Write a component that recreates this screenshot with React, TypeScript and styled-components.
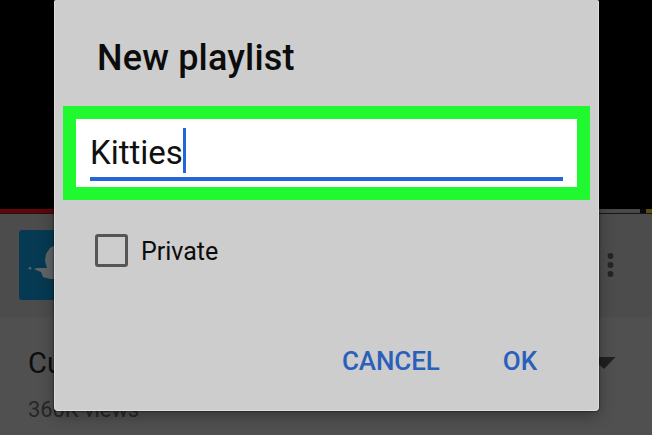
import React from "react";
import styled, { createGlobalStyle } from "styled-components";

const GlobalStyle = createGlobalStyle`
  *, *::before, *::after { box-sizing: border-box; }
  body { margin: 0; overflow: hidden; background: #4e4e4e; font-family: Roboto, sans-serif; }
`;

const Screen = styled.div`
  position: relative;
  width: 652px;
  height: 435px;
  overflow: hidden;
  display: flex;
  flex-direction: column;
`;

const Video = styled.div`
  height: 209px;
  flex: none;
  background: #000;
`;

const Progress = styled.div`
  height: 5px;
  flex: none;
  display: flex;
  background: #080808;
  border-bottom: 1px solid #171717;
`;

const Segment = styled.div<{ $width: number; $color: string }>`
  width: ${(p) => p.$width}px;
  height: 4px;
  flex: none;
  background: ${(p) => p.$color};
`;

const ChannelRow = styled.div`
  height: 103px;
  flex: none;
  padding: 16px 36px 0 18.5px;
  display: flex;
  justify-content: space-between;
  background: #4c4c4c;
`;

const Avatar = styled.div`
  width: 70px;
  height: 70px;
  border-radius: 3px;
  overflow: hidden;
  background: #063a53;
`;

const MoreIcon = styled.svg`
  display: block;
  width: 12px;
  height: 36px;
  margin-top: 17px;
`;

const Info = styled.div`
  flex: 1;
  position: relative;
  padding: 28px 35px 0 28px;
  background: #505050;
`;

const InfoHeader = styled.div`
  display: flex;
  justify-content: space-between;
  height: 36px;
`;

const VideoTitle = styled.div`
  font-size: 29px;
  line-height: 36px;
  color: #0d0d0d;
`;

const Arrow = styled.svg`
  display: block;
  width: 26px;
  height: 13px;
  margin-top: 12px;
`;

const Views = styled.div`
  margin-top: 16px;
  font-size: 22px;
  line-height: 26px;
  letter-spacing: -0.08px;
  color: #272727;
`;

const Dialog = styled.div`
  position: absolute;
  left: 54px;
  top: 0;
  width: 545px;
  height: 411px;
  padding: 37px 9px 0;
  display: flex;
  flex-direction: column;
  background: #cdcdcd;
  border: solid #dedede;
  border-width: 0 1px 1px;
  border-radius: 2px 2px 4px 4px;
  box-shadow: 0 0 2px #000, 0 5px 16px rgba(0, 0, 0, 0.32);
`;

const Heading = styled.h1`
  margin: 0 0 0 33px;
  font-size: 36px;
  font-weight: 500;
  line-height: 42px;
  letter-spacing: 0.18px;
  height: 69px;
  color: #0c0c0c;
  white-space: nowrap;
`;

const Highlight = styled.div`
  width: 527px;
  height: 94px;
  flex: none;
  margin-left: -1px;
  border: 13px solid #20f92f;
  padding: 9px 14px 0;
  background: #fff;
`;

const Field = styled.div`
  height: 53px;
  display: flex;
  border-bottom: 4px solid #2466d5;
  font-size: 33px;
  line-height: 49px;
  color: #101010;
`;

const Caret = styled.span`
  width: 3px;
  height: 45px;
  background: #2466d5;
`;

const CheckRow = styled.label`
  display: flex;
  align-items: center;
  height: 33px;
  margin: 34px 0 0 31px;
  font-size: 25px;
  line-height: 33px;
  color: #0c0c0c;
`;

const CheckLabel = styled.span`
  padding-top: 2px;
`;

const Checkbox = styled.span`
  width: 33px;
  height: 33px;
  margin-right: 13px;
  border: 3px solid #565656;
  border-radius: 3px;
`;

const Actions = styled.div`
  display: flex;
  justify-content: flex-end;
  gap: 63px;
  margin: 78px 52px 0 0;
`;

const Action = styled.button`
  padding: 0;
  border: 0;
  background: none;
  font: 500 26px/32px Roboto, sans-serif;
  letter-spacing: -0.08px;
  color: #2a60bb;
`;

export default function App() {
  return (
    <>
      <GlobalStyle />
      <Screen>
        <Video />
        <Progress>
          <Segment $width={200} $color="#650508" />
          <Segment $width={440} $color="#494949" />
          <Segment $width={6} $color="#080808" />
          <Segment $width={6} $color="#55500b" />
        </Progress>
        <ChannelRow>
          <Avatar>
            <svg width="70" height="70" viewBox="0 0 70 70" fill="#606466">
              <path d="M36 15 L31 18 L27 24 L26 31 L28 38 L18 38 L15 39 L17 40 L22 42 L24 47 L31 49 L45 49 L48 15Z" />
              <circle cx="11" cy="38.3" r="1.3" />
            </svg>
          </Avatar>
          <MoreIcon viewBox="0 0 12 36" fill="#242424">
            <circle cx="6.5" cy="9" r="2.9" />
            <circle cx="6.5" cy="18" r="2.9" />
            <circle cx="6.5" cy="27" r="2.9" />
          </MoreIcon>
        </ChannelRow>
        <Info>
          <InfoHeader>
            <VideoTitle>Cu</VideoTitle>
            <Arrow viewBox="0 0 26 13">
              <path d="M0 0H24.5L13 12Z" fill="#202020" />
            </Arrow>
          </InfoHeader>
          <Views>360K views</Views>
        </Info>
        <Dialog role="dialog">
          <Heading>New playlist</Heading>
          <Highlight>
            <Field>
              Kitties
              <Caret />
            </Field>
          </Highlight>
          <CheckRow>
            <Checkbox />
            <CheckLabel>Private</CheckLabel>
          </CheckRow>
          <Actions>
            <Action>CANCEL</Action>
            <Action>OK</Action>
          </Actions>
        </Dialog>
      </Screen>
    </>
  );
}
